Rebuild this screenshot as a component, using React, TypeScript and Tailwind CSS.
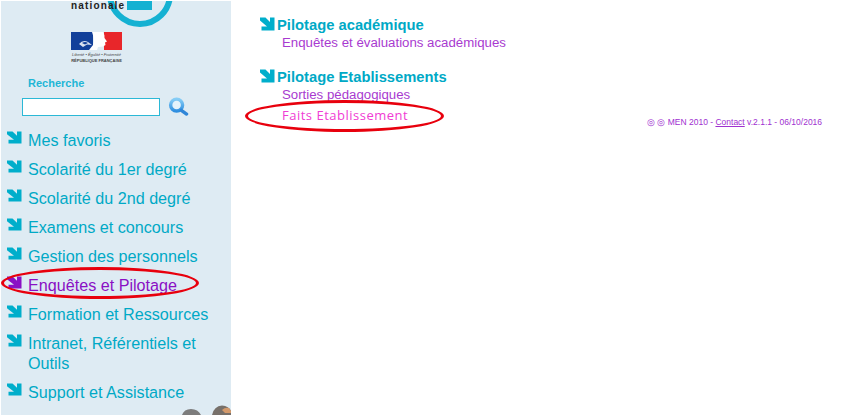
import React from "react";

const menu = [
  "Mes favoris",
  "Scolarité du 1er degré",
  "Scolarité du 2nd degré",
  "Examens et concours",
  "Gestion des personnels",
  "Enquêtes et Pilotage",
  "Formation et Ressources",
  "Intranet, Référentiels et Outils",
  "Support et Assistance",
];

function Arrow({ color = "#00aecb", className = "" }: { color?: string; className?: string }) {
  return (
    <svg viewBox="0 0 16 14" preserveAspectRatio="none" className={className}>
      <path d="M1 0.5 L6.5 0.5 L11 5 L11 0.5 L15.5 0.5 L15.5 13.5 L2.5 13.5 L2.5 9.5 L8 9.5 L1 3.5 Z" fill={color} />
    </svg>
  );
}

function Marianne() {
  return (
    <svg viewBox="0 0 51 18" className="h-[18px] w-[51px]">
      <rect x="0" y="0" width="22" height="18" fill="#12409a" />
      <rect x="33" y="0" width="18" height="18" fill="#e8262a" />
      <path d="M21 0 L32 0 Q34 3 33.5 6 L36 9.5 L34 10.5 L34.5 13 L32 14.5 L27 15 L26 18 L18 18 L22 13 Q24 8 21 0 Z" fill="#ffffff" />
      <path d="M8 12 Q12 7 17 10 L21 13 L16 12.5 L12 15 Z" fill="#ffffff" opacity="0.85" />
      <path d="M11 11 Q14 9 17 11 L14 12.5 Z" fill="#12409a" />
    </svg>
  );
}

export default function App() {
  return (
    <div className="relative flex h-[418px] w-[847px] overflow-hidden bg-white font-['Liberation_Sans',Arial,sans-serif]">
      <aside className="relative mb-[3px] ml-px mt-px w-[230px] shrink-0 overflow-hidden bg-[#deebf3]">
        {/* logo coupe en haut */}
        <svg viewBox="0 0 70 30" className="absolute left-[105px] top-[-1px] h-[30px] w-[70px]">
          <circle cx="34" cy="-6" r="30" fill="none" stroke="#15b1d2" strokeWidth="6" />
          <rect x="21" y="0" width="25" height="10" fill="#15b1d2" />
        </svg>
        <div className="relative flex h-[26px] items-start pl-[70px]">
          <span className="text-[10px] font-bold leading-[9px] tracking-[1.15px] text-[#222]">nationale</span>
        </div>

        <div className="mt-[5px] flex flex-col pl-[70px]">
          <Marianne />
          <div className="mt-[2px] h-[13px] w-[51px] whitespace-nowrap text-center text-[4px] leading-[6px] text-[#444]">
            <div className="italic">Liberté • Égalité • Fraternité</div>
            <div className="font-bold">RÉPUBLIQUE FRANÇAISE</div>
          </div>
        </div>

        <div className="mt-[12px] pl-[27px] text-[11px] font-bold leading-[13px] text-[#1fb6d6]">Recherche</div>
        <div className="mt-[7px] flex items-center pl-[21px]">
          <div className="h-[18px] w-[138px] border border-[#2bb8d6] bg-white" />
          <svg viewBox="0 0 22 20" className="ml-[8px] h-[19px] w-[21px]">
            <defs>
              <linearGradient id="loupe" x1="0" y1="0" x2="0" y2="1">
                <stop offset="0" stopColor="#86cdf6" />
                <stop offset="1" stopColor="#2f8fe0" />
              </linearGradient>
            </defs>
            <circle cx="9" cy="8.5" r="6.3" fill="#e3f2fb" stroke="url(#loupe)" strokeWidth="3.6" />
            <path d="M14 14 L19.5 18" stroke="#2f86d8" strokeWidth="3.5" strokeLinecap="round" />
          </svg>
        </div>

        <nav className="mt-[14px] flex flex-col gap-[9px] pr-2">
          {menu.map((item) => {
            const active = item === "Enquêtes et Pilotage";
            return (
              <div key={item} className="flex items-start pl-[5px]">
                <Arrow color={active ? "#8a10c4" : "#00aecb"} className="mt-[1px] h-[13px] w-[16px] shrink-0" />
                <span className={`ml-[6px] text-[16.15px] leading-[20px] ${active ? "text-[#8a10c4]" : "text-[#00a9c6]"}`}>
                  {item}
                </span>
              </div>
            );
          })}
        </nav>

        {/* tetes en bas de la colonne */}
        <svg viewBox="0 0 52 10" className="absolute bottom-0 right-0 h-[10px] w-[52px]">
          <path d="M3 10 Q5 4 12 4 Q19 4 22 10 Z" fill="#7c7c7c" />
          <path d="M33 10 Q35 1 43 0.5 Q50 1 52 6 L52 10 Z" fill="#77706a" />
          <path d="M43 5 Q46 2 50 3 L52 6 L52 8 L46 8 Z" fill="#d49a6c" />
        </svg>
      </aside>

      <main className="flex flex-1 items-start pl-[28px] pt-[16px]">
        <div className="w-[388px] shrink-0">
          <section>
            <div className="flex items-start">
              <Arrow className="mt-[1px] h-[14px] w-[16px] shrink-0" />
              <h2 className="ml-[2px] text-[14.75px] font-bold leading-[18px] text-[#00a9c6]">Pilotage académique</h2>
            </div>
            <div className="ml-[23px] text-[13.25px] leading-[18px] text-[#a83ad0]">Enquêtes et évaluations académiques</div>
          </section>
          <section className="mt-[16px]">
            <div className="flex items-start">
              <Arrow className="mt-[1px] h-[14px] w-[16px] shrink-0" />
              <h2 className="ml-[2px] text-[14.75px] font-bold leading-[18px] text-[#00a9c6]">Pilotage Etablissements</h2>
            </div>
            <div className="ml-[23px] text-[13.25px] leading-[18px] text-[#a83ad0]">Sorties pédagogiques</div>
            <div className="ml-[23px] mt-[2px] font-['Open_Sans',sans-serif] text-[13px] leading-[18px] tracking-[0.5px] text-[#f03cd4]">
              Faits Etablissement
            </div>
          </section>
        </div>
        <div className="mt-[100px] whitespace-nowrap text-[8.5px] leading-[12px] text-[#a030d0]">
          ◎ ◎ MEN 2010 - <span className="underline">Contact</span> v.2.1.1 - 06/10/2016
        </div>
      </main>

      {/* ellipses rouges d'annotation */}
      <div className="pointer-events-none absolute left-[1px] top-[267px] h-[32px] w-[198px] rounded-[50%] border-[3px] border-[#e8000d]" />
      <div className="pointer-events-none absolute left-[245px] top-[100px] h-[32px] w-[199px] rounded-[50%] border-[3px] border-[#e8000d]" />
    </div>
  );
}
